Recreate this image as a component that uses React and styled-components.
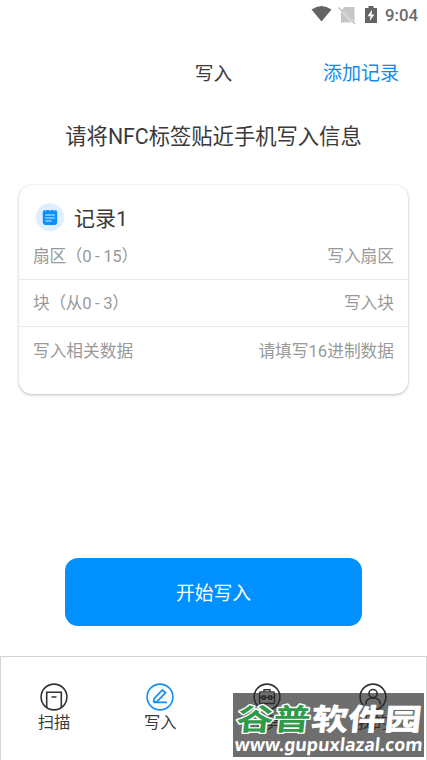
import React from "react";
import styled, { createGlobalStyle } from "styled-components";

const GlobalStyle = createGlobalStyle`
  * { box-sizing: border-box; }
  body { margin: 0; background: #fff; }
`;

const Screen = styled.div`
  position: relative;
  display: flex;
  flex-direction: column;
  width: 427px;
  height: 760px;
  overflow: hidden;
  background: #fff;
  color: #3a3a3a;
  font-family: Roboto, "Noto Sans CJK SC", sans-serif;
`;

const StatusBar = styled.div`
  display: flex;
  align-items: center;
  justify-content: flex-end;
  height: 30px;
  padding-right: 9px;
  svg { display: block; }
`;

const Clock = styled.span`
  margin-left: 5px;
  font-size: 16.8px;
  font-weight: 500;
  line-height: 30px;
  color: #6a6a6a;
`;

const TitleBar = styled.header`
  display: grid;
  grid-template-columns: 1fr auto 1fr;
  align-items: center;
  height: 54px;
  margin-top: 17px;
  padding: 0 28px;
  line-height: 28px;
`;

const Title = styled.h1`
  grid-column: 2;
  margin: 0;
  font-size: 18.7px;
  font-weight: 400;
`;

const AddButton = styled.button`
  justify-self: end;
  padding: 0;
  border: 0;
  background: none;
  color: #108cf0;
  font: 400 19px/28px Roboto, "Noto Sans CJK SC", sans-serif;
`;

const Hint = styled.p`
  height: 32px;
  margin: 20px 0 0;
  text-align: center;
  font-size: 21.3px;
  line-height: 32px;
`;

const Card = styled.section`
  width: 389px;
  height: 209px;
  margin: 32px 0 0 19px;
  border-radius: 13px;
  background: #fff;
  box-shadow: 0 1px 3px rgba(0, 0, 0, 0.26), 0 0 1px rgba(0, 0, 0, 0.12);
`;

const CardHeader = styled.div`
  display: flex;
  align-items: center;
  gap: 10px;
  height: 47px;
  padding: 18px 16px 0 17px;
  font-size: 21px;
  line-height: 29px;
  svg { display: block; flex: none; }
`;

const CardTitle = styled.span`
  padding-top: 3px;
`;

const Row = styled.div`
  display: flex;
  align-items: center;
  justify-content: space-between;
  height: ${(p) => p.$height}px;
  padding: ${(p) => (p.$last ? "0" : "2px")} 14px 0;
  border-bottom: ${(p) => (p.$last ? "0" : "1px solid #e9e9e9")};
  color: #999;
  font-size: 16.7px;
  line-height: 24px;
`;

const RowLabel = styled.span`
  letter-spacing: ${(p) => p.$tracking || 0}px;
`;

const StartButton = styled.button`
  width: 297px;
  height: 68px;
  margin: 164px auto 0 65px;
  padding: 3px 0 0;
  border: 0;
  border-radius: 13px;
  background: #0090ff;
  color: #fff;
  font: 400 18.8px/28px Roboto, "Noto Sans CJK SC", sans-serif;
`;

const TabBar = styled.nav`
  display: grid;
  grid-template-columns: repeat(4, 1fr);
  height: 104px;
  margin-top: auto;
  border: 1px solid #d4d4d4;
  border-bottom: 0;
`;

const Tab = styled.div`
  display: flex;
  flex-direction: column;
  align-items: center;
  padding-top: 26px;
  font-size: 16.3px;
  line-height: 24px;
  svg {
    display: block;
    color: ${(p) => (p.$active ? "#168df0" : "#333")};
  }
`;

const Watermark = styled.div`
  position: absolute;
  right: 3px;
  bottom: 3px;
  width: 191px;
  height: 64px;
  background: rgba(39, 39, 39, 0.67);
  svg { display: block; overflow: visible; }
`;

const SystemIcons = () => (
  <svg width="70" height="22" viewBox="0 0 70 22">
    <path d="M0.5 5.500Q10.500 -1.500 20.500 5.500L10.500 17.500Z" fill="#646464" transform="translate(1 0)" />
    <path d="M33.5 3h10v15L31 5.5Z M30 7.500L40.500 18.500H30Z" fill="#c6c6c6" transform="translate(1 0)" />
    <path d="M28.500 3.500L45 20" stroke="#bbb" strokeWidth="1.3" />
    <path d="M55 4h3.5V2h5v2H67v15H55Z" fill="#646464" />
    <path d="M62.200 5.500L57.500 12.200h3L59.700 17L64.500 10.500H61.500Z" fill="#fff" />
  </svg>
);

const RecordIcon = () => (
  <svg width="28" height="29" viewBox="0 0 28 29">
    <circle cx="14" cy="14.2" r="14" fill="#dceeff" />
    <rect x="6.8" y="7" width="14.4" height="15" rx="2.4" fill="#0a8fff" />
    <path d="M9.8 6v2.2M14 6v2.2M18.2 6v2.2" stroke="#dceeff" strokeWidth="1" />
    <path d="M9.2 12h9.8M9.2 15h9.8M9.2 18h6.4" stroke="#dceeff" strokeWidth="1.1" />
  </svg>
);

const TabIcon = ({ children }) => (
  <svg width="28" height="28" viewBox="0 0 28 28" fill="none" stroke="currentColor" strokeWidth="1.6">
    <circle cx="14" cy="14" r="12.9" />
    {children}
  </svg>
);

const tabs = [
  {
    label: "扫描",
    drawing: <path d="M6.7 24.5V9.2h14.6v15.3M11.5 14h5" />,
  },
  {
    label: "写入",
    active: true,
    drawing: <path d="M7.5 19.3l.6-3.7 8.2-8.600 3.2 2.900-8.6 8.800-3.4.6H21" strokeWidth="1.7" />,
  },
  {
    label: "工具",
    drawing: (
      <g strokeWidth="1.4">
        <rect x="6.5" y="9" width="15" height="11.5" rx="1" />
        <path d="M11 9V6.8h6V9M6.5 14.5h3M12 14.5h4M18.5 14.5h3" />
        <rect x="9.5" y="13" width="2.5" height="3.2" />
        <rect x="16" y="13" width="2.5" height="3.2" />
      </g>
    ),
  },
  {
    label: "我的",
    drawing: (
      <>
        <circle cx="14" cy="10.6" r="4.1" />
        <path d="M6.8 21.5v-.8c0-7.8 14.4-7.8 14.4 0v.8" />
      </>
    ),
  },
];

const rows = [
  { label: "扇区（0 - 15）", value: "写入扇区", height: 48, tracking: -0.3 },
  { label: "块（从0 - 3）", value: "写入块", height: 47, tracking: -0.3 },
  { label: "写入相关数据", value: "请填写16进制数据", height: 49, last: true },
];

export default function App() {
  return (
    <Screen>
      <GlobalStyle />
      <StatusBar>
        <SystemIcons />
        <Clock>9:04</Clock>
      </StatusBar>
      <TitleBar>
        <Title>写入</Title>
        <AddButton>添加记录</AddButton>
      </TitleBar>
      <Hint>请将NFC标签贴近手机写入信息</Hint>
      <Card>
        <CardHeader>
          <RecordIcon />
          <CardTitle>记录1</CardTitle>
        </CardHeader>
        {rows.map((r) => (
          <Row key={r.label} $height={r.height} $last={r.last}>
            <RowLabel $tracking={r.tracking}>{r.label}</RowLabel>
            <span>{r.value}</span>
          </Row>
        ))}
      </Card>
      <StartButton>开始写入</StartButton>
      <TabBar>
        {tabs.map((t) => (
          <Tab key={t.label} $active={t.active}>
            <TabIcon>{t.drawing}</TabIcon>
            <span>{t.label}</span>
          </Tab>
        ))}
      </TabBar>
      <Watermark>
        <svg width="191" height="64" viewBox="0 0 191 64">
          <g
            transform="translate(2.5 36.5) skewX(-6) scale(1 .9)"
            fontFamily='"Noto Sans CJK SC", sans-serif'
            fontWeight="700"
            fontSize="33"
            strokeLinejoin="round"
          >
            <text x="0" y="0" fill="#2f9b4a" stroke="#fff" strokeWidth="3" paintOrder="stroke" textLength="74" lengthAdjust="spacingAndGlyphs">谷普</text>
            <text x="75" y="0" fill="#fff" stroke="#fff" strokeWidth="0.8" textLength="110" lengthAdjust="spacingAndGlyphs">软件园</text>
          </g>
          <text
            transform="translate(1 58) skewX(-6)"
            fill="#fff"
            fontFamily='"Noto Sans", sans-serif'
            fontWeight="700"
            fontSize="18"
            textLength="188"
            lengthAdjust="spacingAndGlyphs"
          >
            www.gupuxlazal.com
          </text>
        </svg>
      </Watermark>
    </Screen>
  );
}
